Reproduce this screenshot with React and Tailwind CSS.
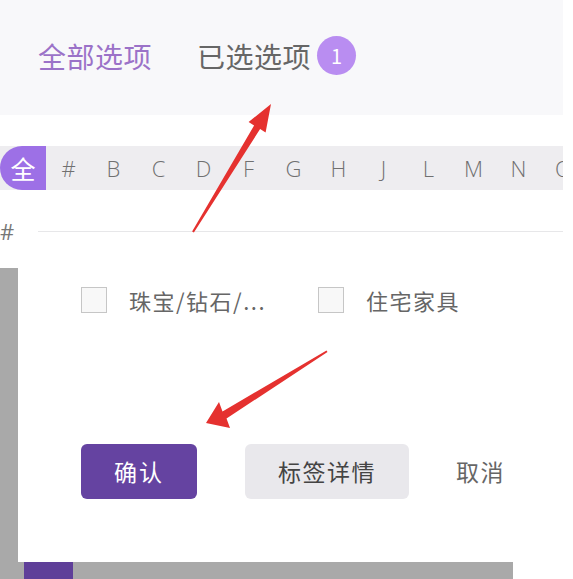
const letters = ["#", "B", "C", "D", "F", "G", "H", "J", "L", "M", "N", "O"];

function Checkbox({ label }) {
  return (
    <div className="flex items-center gap-[22px]">
      <div className="w-[26px] h-[26px] border border-[#c6c6c6] bg-[#f8f8f8]" />
      <span className="text-[22px] leading-none tracking-[1.5px] text-[#666]">{label}</span>
    </div>
  );
}

export default function App() {
  return (
    <div
      className="relative w-[573px] h-[579px] overflow-hidden bg-white"
      style={{ fontFamily: '"Noto Sans CJK SC", "Noto Sans", sans-serif' }}
    >
      {/* tabs */}
      <div className="w-[563px] h-[115px] bg-[#f8f8fa] flex items-center pl-[38px] pb-[4px]">
        <span className="text-[28px] leading-none tracking-[0.5px] text-[#9b72c8]">全部选项</span>
        <span className="ml-[45px] text-[28px] leading-none tracking-[0.5px] text-[#666]">已选选项</span>
        <span className="ml-[6px] w-[39px] h-[39px] rounded-full bg-[#b98df1] text-white text-[20px] flex items-center justify-center">
          1
        </span>
      </div>

      {/* letter index */}
      <div className="mt-[31px] w-[563px] h-[44px] bg-[#eeedf0] flex items-center overflow-hidden">
        <div className="w-[46px] h-full shrink-0 rounded-l-full bg-[#9d70e6] flex items-center justify-center text-white text-[25px] leading-none">
          全
        </div>
        {letters.map((l) => (
          <div
            key={l}
            className="w-[45px] shrink-0 text-center text-[22px] font-light text-[#707070]"
            style={{ fontFamily: '"Open Sans", sans-serif' }}
          >
            {l}
          </div>
        ))}
      </div>

      {/* group header */}
      <div className="h-[78px] pt-[30px]">
        <div className="flex items-center h-[22px] w-[563px]">
          <span
            className="w-[38px] text-[22px] leading-none text-[#777]"
            style={{ fontFamily: '"Open Sans", sans-serif' }}
          >
            #
          </span>
          <div className="flex-1 h-px bg-[#e7e7e9]" />
        </div>
      </div>

      {/* popup panel */}
      <div className="w-[513px] bg-[#a9a9a9] flex flex-col">
        <div className="pl-[18px]">
          <div className="w-[495px] h-[294px] bg-white pl-[63px] pt-[19px] flex flex-col">
            <div className="flex items-center gap-[52px]">
              <Checkbox label="珠宝/钻石/..." />
              <Checkbox label="住宅家具" />
            </div>
            <div className="mt-[131px] flex items-center">
              <button className="w-[116px] h-[55px] rounded-[6px] bg-[#6543a1] text-white text-[23px] tracking-[2px]">
                确认
              </button>
              <button className="ml-[48px] w-[164px] h-[55px] rounded-[6px] bg-[#e9e8ec] text-[#444] text-[23px] tracking-[1.5px]">
                标签详情
              </button>
              <button className="ml-[47px] text-[23px] tracking-[1.5px] text-[#666]">取消</button>
            </div>
          </div>
        </div>
        <div className="h-[17px] flex">
          <div className="ml-[24px] w-[49px] h-full bg-[#5f3f99]" />
        </div>
      </div>

      {/* annotation arrows */}
      <svg className="absolute inset-0 pointer-events-none" width="573" height="579">
        <polygon
          fill="#e5312f"
          points="192.1,231.5 254.1,125.4 248.6,122 271,104 265.6,132.4 260.1,129 193.9,232.5"
        />
        <polygon
          fill="#e5312f"
          points="327.5,352 226.5,418.5 230,428 206,423 219,402 222.5,411.5 326.5,350.5"
        />
      </svg>
    </div>
  );
}
